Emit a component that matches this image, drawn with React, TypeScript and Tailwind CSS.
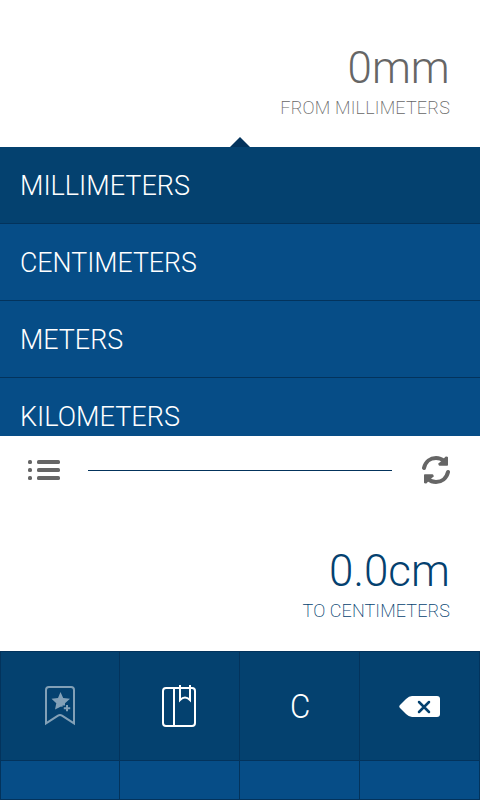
const units = [
  { name: "MILLIMETERS", fit: "scale-x-[0.965]" },
  { name: "CENTIMETERS", fit: "scale-x-[0.955]" },
  { name: "METERS", fit: "scale-x-[0.96]" },
  { name: "KILOMETERS", fit: "scale-x-[0.967]" },
];

function Readout({ value, label, className, labelClass }: { value: string; label: string; className: string; labelClass: string }) {
  return (
    <div className={`flex shrink-0 flex-col items-end pr-[30px] ${className}`}>
      <div className="origin-right scale-x-[0.975] text-[45px] leading-[56px] font-light">{value}</div>
      <div className={`text-[18px] leading-6 font-extralight ${labelClass}`}>{label}</div>
    </div>
  );
}

function ListIcon() {
  return (
    <svg width="32" height="20" viewBox="0 0 32 20" fill="#666">
      {[0, 8, 16].map((y) => (
        <g key={y}>
          <rect x="0" y={y} width="4" height="4" rx="1.6" />
          <rect x="9" y={y} width="23" height="4" rx="1.6" />
        </g>
      ))}
    </svg>
  );
}

function SwapIcon() {
  return (
    <svg width="28" height="28" viewBox="0 0 28 28" fill="none" stroke="#666" strokeWidth="4" strokeLinecap="round">
      <path d="M2 12C3.5 5.5 8.5 2 14 2C17.5 2 20 3.2 22 5" />
      <path d="M26 16C24.5 22.5 19.5 26 14 26C10.5 26 8 24.8 6 23" />
      <path d="M25.2 1.5V9H17.5L17 7.8L19 6.5L24 1.2Z" fill="#666" strokeWidth="1.6" strokeLinejoin="round" />
      <path d="M2.8 26.5V19H10.5L11 20.2L9 21.5L4 26.8Z" fill="#666" strokeWidth="1.6" strokeLinejoin="round" />
    </svg>
  );
}

function BookmarkIcon() {
  return (
    <svg width="30" height="40" viewBox="0 0 30 40" className="opacity-50">
      <path d="M1 37.3V4Q1 1 4 1H26Q29 1 29 4V37.3L17 29.6Q15 28.4 13 29.6Z" fill="none" stroke="white" strokeWidth="2" />
      <path d="M15.5 6L18.2 12L25 12.7L20 17.2V19.5H17.5V21L16 20.5L10 23.5L11.3 17.2L6.5 12.7L13 12Z" fill="white" />
      <path d="M22 19V25.2M18.8 22.2H25.2" stroke="white" strokeWidth="2" />
    </svg>
  );
}

function NotebookIcon() {
  return (
    <svg width="34" height="42" viewBox="0 0 34 42" fill="none" stroke="white" strokeWidth="2">
      <rect x="1" y="3" width="32" height="38" rx="3" />
      <path d="M12 3V41" />
      <path d="M18 0V15Q23 10 28 15V0" />
    </svg>
  );
}

function BackspaceIcon() {
  return (
    <svg width="41" height="21" viewBox="0 0 41 21">
      <path d="M1 12Q-0.5 10.5 1 9L7 3Q10 0 13 0H38Q41 0 41 3V18Q41 21 38 21H13Q10 21 7 18Z" fill="white" />
      <path d="M20 6L30 16M30 6L20 16" stroke="#04416f" strokeWidth="2.5" strokeLinecap="round" />
    </svg>
  );
}

export default function App() {
  return (
    <div className="flex h-[800px] w-[480px] flex-col overflow-hidden bg-white font-['Roboto',sans-serif]">
      <Readout value="0mm" label="FROM MILLIMETERS" className="h-[137px] pt-10 text-[#666]" labelClass="tracking-[0.19px]" />
      <div className="flex h-[10px] shrink-0 justify-center">
        <svg width="20" height="10" viewBox="0 0 20 10">
          <path d="M0 10L10 0L20 10Z" fill="#03335c" />
        </svg>
      </div>
      <ul className="h-[289px] shrink-0 overflow-hidden bg-[#064d87] text-[28px] font-light text-white">
        {units.map(({ name, fit }, i) => (
          <li key={name} className={`flex h-[77px] items-center border-b border-[#03335c] pt-0.5 pl-5 ${i === 0 ? "bg-[#04416f]" : ""}`}>
            <span className={`origin-left ${fit}`}>{name}</span>
          </li>
        ))}
      </ul>
      <div className="flex h-[68px] shrink-0 items-center pr-[30px] pl-7">
        <ListIcon />
        <div className="mt-px mr-[30px] ml-7 h-px flex-1 bg-[#03335c]" />
        <SwapIcon />
      </div>
      <Readout value="0.0cm" label="TO CENTIMETERS" className="h-[147px] pt-[39px] text-[#04416f]" labelClass="tracking-[0.1px]" />
      <div className="grid shrink-0 grid-cols-[118px_119px_119px_119px] grid-rows-[108px_38px] gap-px bg-[#03335c] p-px">
        <div className="flex items-center justify-center bg-[#04416f]"><BookmarkIcon /></div>
        <div className="flex items-center justify-center bg-[#04416f] pr-px"><NotebookIcon /></div>
        <div className="flex items-center justify-center bg-[#04416f] pl-px text-[34px] font-light text-white"><span className="scale-x-[0.92]">C</span></div>
        <div className="flex items-center justify-center bg-[#04416f]"><BackspaceIcon /></div>
        <div className="bg-[#064d87]" />
        <div className="bg-[#064d87]" />
        <div className="bg-[#064d87]" />
        <div className="bg-[#064d87]" />
      </div>
    </div>
  );
}
